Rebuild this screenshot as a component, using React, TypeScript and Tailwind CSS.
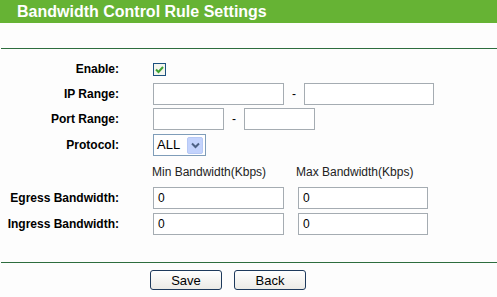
import React from "react";

const font = { fontFamily: '"Liberation Sans", Arial, sans-serif' };

function TextBox({ width, value }: { width: string; value?: string }) {
  return (
    <div
      className={`${width} h-[22px] border border-[#a5acb2] bg-white flex items-center pl-[4px] text-[12px] text-black`}
    >
      {value}
    </div>
  );
}

function Row({
  label,
  h,
  children,
}: {
  label: string;
  h: string;
  children?: React.ReactNode;
}) {
  return (
    <div className={`flex items-center ${h}`}>
      <div className="w-[120px] shrink-0 text-right pr-[1px] text-[12px] font-bold text-black">
        {label}
      </div>
      <div className="flex items-center pl-[33px]">{children}</div>
    </div>
  );
}

function Dash() {
  return <span className="w-[20px] text-center text-[12px] text-black">-</span>;
}

export default function App() {
  return (
    <div className="w-[497px] h-[297px] bg-[#fdfdfd] overflow-hidden" style={font}>
      {/* Titulo */}
      <div className="h-[23px] bg-[#66b334] flex items-center pl-[17px]">
        <h1 className="text-[16px] font-bold text-white leading-none">
          Bandwidth Control Rule Settings
        </h1>
      </div>
      <div className="h-[25px]" />
      <div className="ml-[1px] h-px bg-[#2d6d3e]" />

      {/* Formulario */}
      <div className="pt-[7px]">
        <Row label="Enable:" h="h-[26px]">
          <div className="w-[13px] h-[13px] border border-[#1c5180] bg-[#f4f6ee] flex items-center justify-center">
            <svg width="9" height="9" viewBox="0 0 9 9">
              <path d="M1 4.5 L3.5 7 L8 2" stroke="#3fa233" strokeWidth="2" fill="none" />
            </svg>
          </div>
        </Row>
        <Row label="IP Range:" h="h-[24px]">
          <TextBox width="w-[131px]" />
          <Dash />
          <TextBox width="w-[130px]" />
        </Row>
        <Row label="Port Range:" h="h-[25px]">
          <TextBox width="w-[71px]" />
          <Dash />
          <TextBox width="w-[71px]" />
        </Row>
        <Row label="Protocol:" h="h-[28px]">
          <div className="w-[53px] h-[22px] border border-[#7f9db9] bg-white flex items-center justify-between pl-[3px] pr-[2px] text-[13px] text-black">
            <span>ALL</span>
            <div className="w-[16px] h-[17px] rounded-[2px] bg-[#c3d3fd] border border-[#b7c9f5] flex items-center justify-center">
              <svg width="9" height="7" viewBox="0 0 9 7">
                <path d="M1 1.5 L4.5 5 L8 1.5" stroke="#4d6185" strokeWidth="2" fill="none" />
              </svg>
            </div>
          </div>
        </Row>
        <div className="flex items-center h-[26px] text-[12px] text-[#222]">
          <div className="w-[152px]" />
          <span className="w-[144px]">Min Bandwidth(Kbps)</span>
          <span>Max Bandwidth(Kbps)</span>
        </div>
        <Row label="Egress Bandwidth:" h="h-[25px]">
          <TextBox width="w-[131px]" value="0" />
          <div className="w-[14px]" />
          <TextBox width="w-[130px]" value="0" />
        </Row>
        <Row label="Ingress Bandwidth:" h="h-[27px]">
          <TextBox width="w-[131px]" value="0" />
          <div className="w-[14px]" />
          <TextBox width="w-[130px]" value="0" />
        </Row>
      </div>

      <div className="h-[25px]" />
      <div className="ml-[1px] h-px bg-[#2d6d3e]" />

      {/* Botoes */}
      <div className="flex gap-[12px] pl-[150px] pt-[7px]">
        <button className="w-[72px] h-[20px] rounded-[3px] border border-[#1e3a5c] bg-gradient-to-b from-white to-[#ecebe6] text-[13px] text-black leading-none">
          Save
        </button>
        <button className="w-[72px] h-[20px] rounded-[3px] border border-[#1e3a5c] bg-gradient-to-b from-white to-[#ecebe6] text-[13px] text-black leading-none">
          Back
        </button>
      </div>
    </div>
  );
}
